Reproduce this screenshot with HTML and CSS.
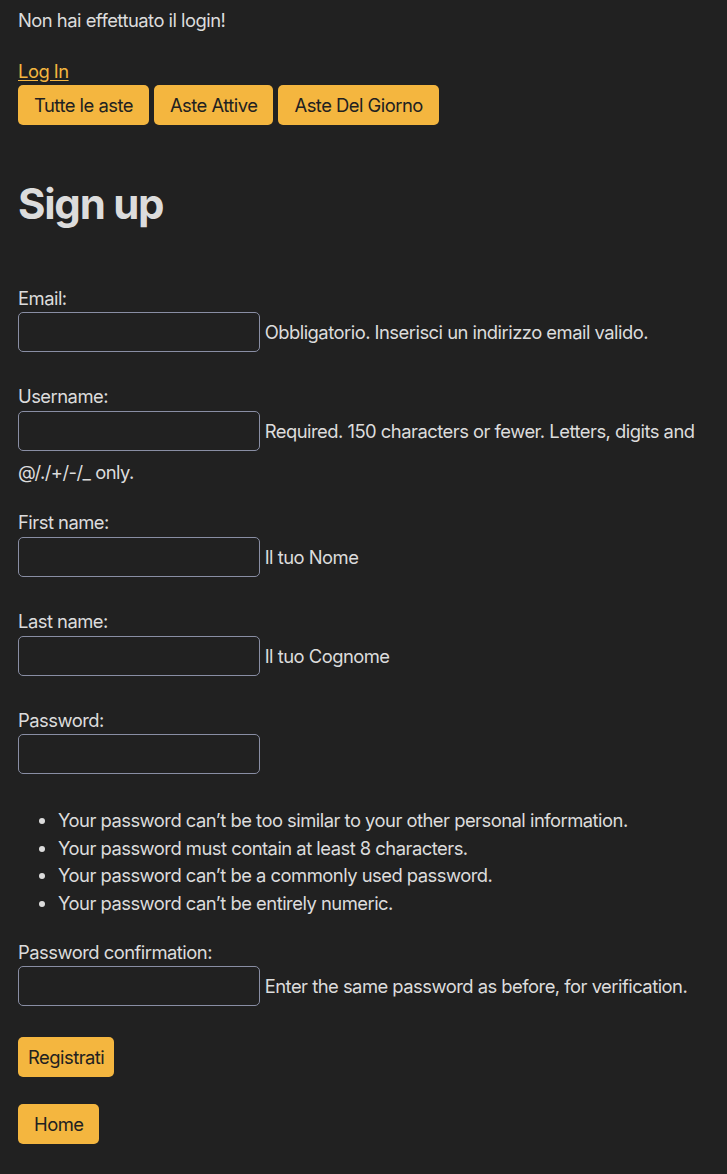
FILE: index.html
```html
<!DOCTYPE html>
<html lang="it">
<head>
<meta charset="utf-8">
<title>Sign up</title>
<link rel="stylesheet" href="styles.css">
</head>
<body>
<main class="page">
  <p class="status">Non hai effettuato il login!</p>
  <a class="link" href="#">Log In</a>
  <nav class="nav">
    <a class="btn" href="#">Tutte le aste</a>
    <a class="btn" href="#">Aste Attive</a>
    <a class="btn" href="#">Aste Del Giorno</a>
  </nav>
  <h1 class="title">Sign up</h1>
  <form class="form">
    <div class="field">
      <label class="label" for="email">Email:</label>
      <p class="row"><input class="input" id="email" type="email"> <span class="help">Obbligatorio. Inserisci un indirizzo email valido.</span></p>
    </div>
    <div class="field">
      <label class="label" for="username">Username:</label>
      <p class="row"><input class="input" id="username" type="text"> <span class="help">Required. 150 characters or fewer. Letters, digits and @/./+/-/_ only.</span></p>
    </div>
    <div class="field">
      <label class="label" for="first">First name:</label>
      <p class="row"><input class="input" id="first" type="text"> <span class="help">Il tuo Nome</span></p>
    </div>
    <div class="field">
      <label class="label" for="last">Last name:</label>
      <p class="row"><input class="input" id="last" type="text"> <span class="help">Il tuo Cognome</span></p>
    </div>
    <div class="field field-pw">
      <label class="label" for="pw1">Password:</label>
      <p class="row"><input class="input" id="pw1" type="password"></p>
      <ul class="rules">
        <li>Your password can’t be too similar to your other personal information.</li>
        <li>Your password must contain at least 8 characters.</li>
        <li>Your password can’t be a commonly used password.</li>
        <li>Your password can’t be entirely numeric.</li>
      </ul>
    </div>
    <div class="field">
      <label class="label" for="pw2">Password confirmation:</label>
      <p class="row"><input class="input" id="pw2" type="password"> <span class="help">Enter the same password as before, for verification.</span></p>
    </div>
    <button class="btn btn-submit" type="submit">Registrati</button>
  </form>
  <a class="btn btn-home" href="#">Home</a>
</main>
</body>
</html>
```

FILE: styles.css
```css
html, body {
  margin: 0;
  padding: 0;
  background: #212121;
}

body {
  color: #dcdcdc;
  font-family: Inter, "Noto Sans", sans-serif;
  font-size: 18.4px;
  line-height: 1.5;
  letter-spacing: -0.028em;
}

.page {
  padding: 7px 18px 20px;
}

.status {
  margin: 0 0 23px;
}

.link {
  color: #f4b63f;
  text-decoration: underline;
  text-underline-offset: 2px;
}

.nav {
  display: flex;
  gap: 5px;
}

.btn {
  display: inline-block;
  background: #f4b63f;
  color: #212121;
  border: none;
  border-radius: 5px;
  padding: 8px 16px;
  font-family: inherit;
  font-size: 18.4px;
  line-height: 24px;
  letter-spacing: -0.028em;
  text-decoration: none;
}

.title {
  font-size: 42px;
  line-height: 1.2;
  font-weight: 700;
  letter-spacing: -0.03em;
  margin: 54px 0 55px;
}

.form {
  margin: 0;
}

.field {
  margin: 0 0 23px;
}

.label {
  display: block;
}

.row {
  margin: 0;
}

.input {
  display: inline-block;
  box-sizing: border-box;
  width: 242px;
  height: 40px;
  margin: 0 0 8px;
  padding: 8px;
  background: #212121;
  color: #dcdcdc;
  border: 1px solid #898ea4;
  border-radius: 5px;
  font-family: inherit;
  font-size: 18.4px;
  vertical-align: baseline;
}

.rules {
  margin: 25px 0 0;
  padding-left: 40px;
}

.field-pw {
  margin-bottom: 21px;
}

.btn-submit {
  display: block;
  padding: 8px 10px;
  margin: 2px 0 27px;
  cursor: pointer;
}
```
